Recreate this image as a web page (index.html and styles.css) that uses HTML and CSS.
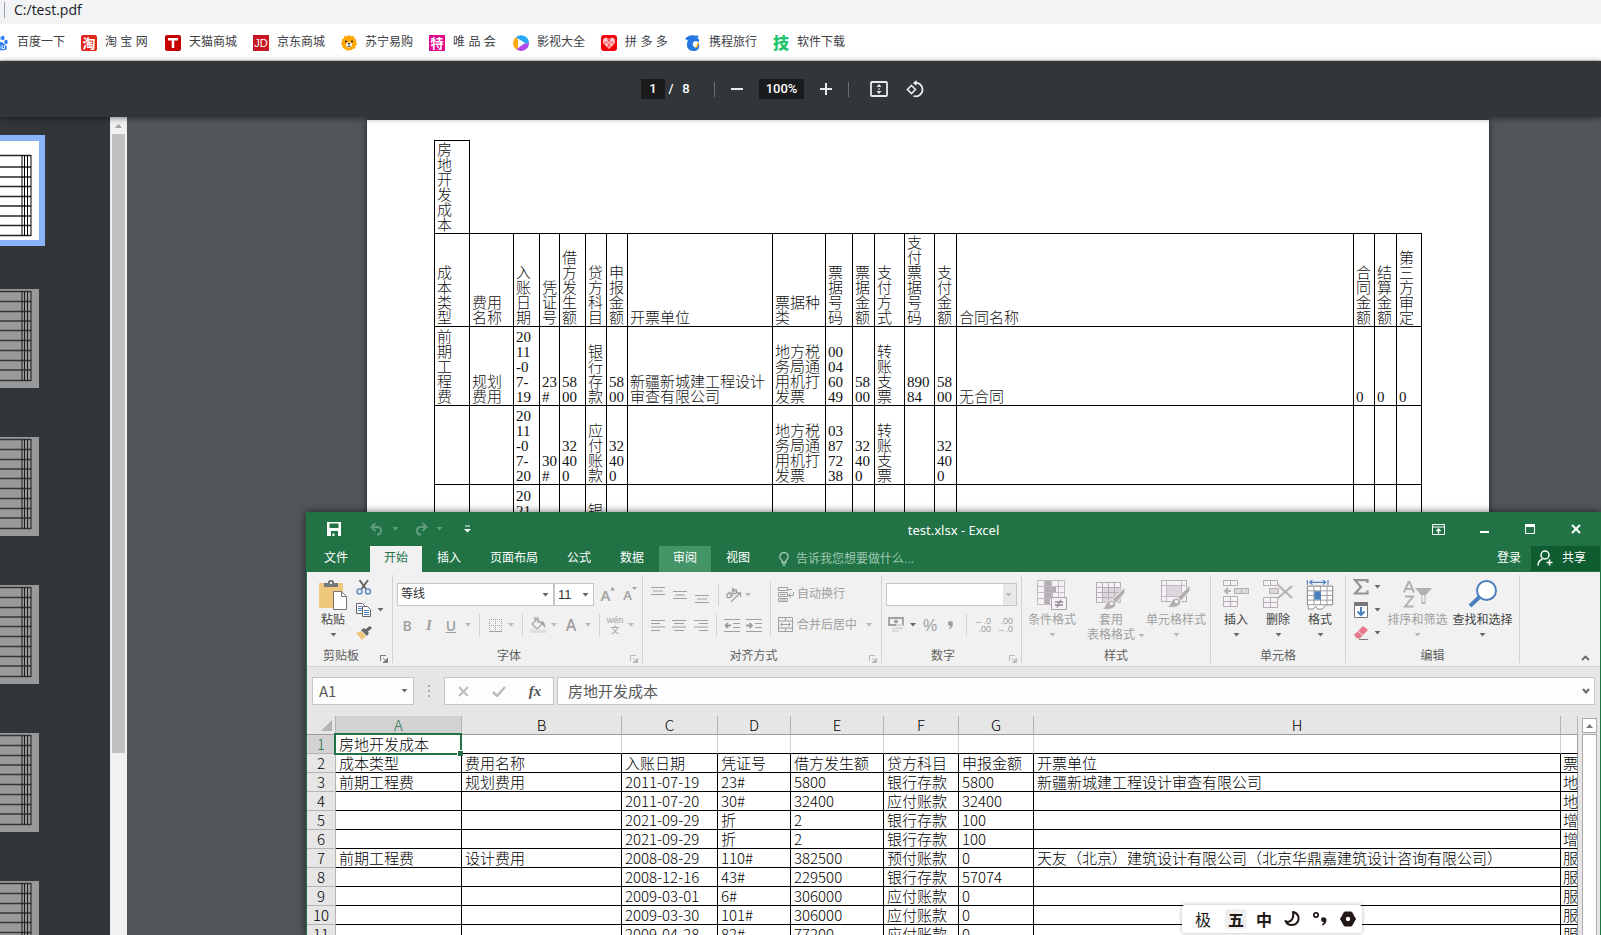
FILE: index.html
```html
<!DOCTYPE html>
<html lang="zh-CN">
<head>
<meta charset="utf-8">
<title>test.pdf</title>
<link rel="stylesheet" href="styles.css">
</head>
<body>
<svg class="defs" aria-hidden="true">
  <symbol id="arrow" viewBox="0 0 7 4"><path d="M0.5 0h6L3.5 3.5z" fill="currentColor"/></symbol>
  <symbol id="launch" viewBox="0 0 8 8"><path d="M0.5 6V0.5H6M3 3l3 3M7.500 3v4.500H3" fill="none" stroke="currentColor"/><path d="M7 3.500V7H3.500z" fill="currentColor"/></symbol>
  <symbol id="thumb-lines" viewBox="0 0 39 99">
    <g stroke="currentColor"><path d="M0 2.500h31M0 12.500h31M0 22.500h31M0 32h31M0 41.500h31M0 51.500h31M0 61.500h31M0 71.500h31M0 81h31M0 91.500h31" stroke-width="1.500" stroke-opacity=".8"/><path d="M24.500 2v90M27.500 2v90" /><path d="M22 2v90M31 2v90" stroke-width="2" stroke-opacity=".5"/></g>
  </symbol>
</svg>

<header class="address">
  <span class="address__rule"></span>
  <input class="address__input" aria-label="地址" value="C:/test.pdf">
</header>

<nav class="bookmarks">
  <a class="bookmark" href="#"><svg width="16" height="16" viewBox="0 0 16 16"><g fill="#2f7df6"><ellipse cx="2.500" cy="7.500" rx="1.700" ry="2.200"/><ellipse cx="5.700" cy="3.400" rx="1.800" ry="2.400"/><ellipse cx="9.800" cy="3" rx="1.800" ry="2.300"/><ellipse cx="13" cy="7" rx="1.700" ry="2.200"/><path d="M8 7c-2 0-2.500 2-4 3.300-2.200 2-1 5 1.500 5 1.500 0 3.500-.2 5 0 3.500.3 4.300-3 2.200-5C11 9 10 7 8 7z"/></g><path d="M5 11.500h2v2H5zM9 10v3.500h2.500V10" fill="none" stroke="#fff"/></svg><span>百度一下</span></a>
  <a class="bookmark bookmark--wide" href="#"><b class="badge badge--taobao">淘</b><span>淘 宝 网</span></a>
  <a class="bookmark" href="#"><svg width="16" height="16" viewBox="0 0 16 16"><rect width="16" height="16" rx="2" fill="#c40000"/><path d="M3 3h10v2.500H9.300V13H6.700V5.500H3z" fill="#fff"/></svg><span>天猫商城</span></a>
  <a class="bookmark" href="#"><b class="badge badge--jd">JD</b><span>京东商城</span></a>
  <a class="bookmark" href="#"><svg width="16" height="16" viewBox="0 0 16 16"><path d="M8 0l2 1.300 2.500-.3 1 2.300L15.300 5 15 7l1 2-1.500 2-.3 2.300-2.500.7L10 15.500 8 15l-2 .8-1.800-1.500L1.700 13 1.500 11 0 9l1-2L.700 4.700 2.700 3.300 3.500 1 6 1.300z" fill="#ffa800"/><circle cx="5" cy="6.500" r="1" fill="#222"/><circle cx="11" cy="6.500" r="1" fill="#222"/><ellipse cx="8" cy="9.800" rx="3" ry="2.600" fill="#fff"/><path d="M6.500 8h3L8 10z" fill="#222"/><path d="M6.500 11.200h3" stroke="#222"/></svg><span>苏宁易购</span></a>
  <a class="bookmark bookmark--wide" href="#"><b class="badge badge--vip">特</b><span>唯 品 会</span></a>
  <a class="bookmark" href="#"><svg width="16" height="16" viewBox="0 0 16 16"><path d="M3 2a8 8 0 0 1 13 6L9 9z" fill="#27a9f3"/><path d="M3 2a8 8 0 0 0 1 13l3-7z" fill="#ffab0f"/><path d="M16 8A8 8 0 0 1 3.500 14.500L10 9z" fill="#b04ae8"/><path d="M5 3.500v9L12 8z" fill="#fff"/></svg><span>影视大全</span></a>
  <a class="bookmark bookmark--wide" href="#"><svg width="16" height="16" viewBox="0 0 16 16"><rect width="16" height="16" rx="3" fill="#f40009"/><path d="M8 14L2 8V4.500L4.500 2.500 8 4l3.500-1.500L14 4.500V8z" fill="#fcc"/><path d="M3 6l7 6M6 4l7 5M13 6l-7 6M10 4L3 9M8 4v9" stroke="#f40009" stroke-width=".5"/></svg><span>拼 多 多</span></a>
  <a class="bookmark" href="#"><svg width="16" height="16" viewBox="0 0 16 16"><path d="M0 4c2-3 6-4.500 9-3.500L14 .8l-1.500 2c1.500 1 2 3 1 4.700C12 5.500 10 5.500 8.500 7c-1.500 1.600-.6 5 1.500 5.500s3.500-1.300 3-4.500c3 3 1 8-4.500 8C2 16 .5 10 3 5.500z" fill="#2577e3"/><path d="M12.500 8c1 2-.2 4-2 4.500" stroke="#ffa20d" stroke-width="1.500" fill="none"/></svg><span>携程旅行</span></a>
  <a class="bookmark" href="#"><b class="badge badge--tech">技</b><span>软件下载</span></a>
</nav>

<div class="pdfbar">
  <input class="pdfbar__page" aria-label="页码" value="1">
  <span class="pdfbar__slash">/</span><span class="pdfbar__total">8</span>
  <i class="pdfbar__rule"></i>
  <button class="pdfbar__btn" aria-label="缩小"><svg width="12" height="12"><path d="M0 6h12" stroke="#e8eaed" stroke-width="2"/></svg></button>
  <input class="pdfbar__zoom" aria-label="缩放" value="100%">
  <button class="pdfbar__btn" aria-label="放大"><svg width="12" height="12"><path d="M0 6h12M6 0v12" stroke="#e8eaed" stroke-width="2"/></svg></button>
  <i class="pdfbar__rule pdfbar__rule--end"></i>
  <button class="pdfbar__btn pdfbar__btn--fit" aria-label="适合页面"><svg width="18" height="16" viewBox="0 0 18 16"><rect x="1" y="1" width="16" height="14" rx="1" fill="none" stroke="#e8eaed" stroke-width="1.800"/><path d="M9 3l2.500 3h-5zM9 13l2.500-3h-5zM8.300 7.300h1.400v1.400H8.300z" fill="#e8eaed"/></svg></button>
  <button class="pdfbar__btn" aria-label="旋转"><svg width="18" height="18" viewBox="0 0 18 18"><path d="M8 3a6.800 6.800 0 1 1-.5 13" fill="none" stroke="#e8eaed" stroke-width="1.800"/><path d="M10.500 0v6L7 3z" fill="#e8eaed"/><path d="M5.500 5.500L9.500 9.500 5.500 13.500 1.500 9.500z" fill="none" stroke="#e8eaed" stroke-width="1.600"/></svg></button>
</div>

<main class="viewer">
  <aside class="thumbs">
    <div class="thumb thumb--on"><svg viewBox="0 0 39 99"><g stroke="#000"><path d="M0 14.500h31M0 26h31M0 36h31M0 45.500h31M0 55.500h31M0 65h31M0 75h31M0 84.500h31M0 94.500h31" stroke-width="1.500" stroke-opacity=".85"/><path d="M24.500 14v81M27.500 14v81"/><path d="M22 14v81M31 14v81" stroke-width="2" stroke-opacity=".5"/></g></svg></div>
    <div class="thumb"><svg><use href="#thumb-lines"/></svg></div>
    <div class="thumb"><svg><use href="#thumb-lines"/></svg></div>
    <div class="thumb"><svg><use href="#thumb-lines"/></svg></div>
    <div class="thumb"><svg><use href="#thumb-lines"/></svg></div>
    <div class="thumb"><svg><use href="#thumb-lines"/></svg></div>
  </aside>
  <div class="vscroll"><span class="vscroll__up"><svg width="7" height="4"><path d="M0 4h7L3.500 0z" fill="#a3a3a3"/></svg></span><span class="vscroll__thumb"></span><span class="vscroll__rest"></span></div>
  <section class="stage">
    <article class="sheet">
      <table class="ledger">
        <colgroup><col class="w35"><col class="w44"><col class="w26"><col class="w20"><col class="w26"><col class="w21"><col class="w21"><col class="w145"><col class="w53"><col class="w27"><col class="w22"><col class="w30"><col class="w30"><col class="w22"><col><col class="w21"><col class="w22"><col class="w25"></colgroup>
        <tr class="ledger__head"><td>房<br>地<br>开<br>发<br>成<br>本</td><td class="none" colspan="17"></td></tr>
        <tr class="ledger__head"><td>成<br>本<br>类<br>型</td><td>费用<br>名称</td><td>入<br>账<br>日<br>期</td><td>凭<br>证<br>号</td><td>借<br>方<br>发<br>生<br>额</td><td>贷<br>方<br>科<br>目</td><td>申<br>报<br>金<br>额</td><td>开票单位</td><td>票据种<br>类</td><td>票<br>据<br>号<br>码</td><td>票<br>据<br>金<br>额</td><td>支<br>付<br>方<br>式</td><td>支<br>付<br>票<br>据<br>号<br>码</td><td>支<br>付<br>金<br>额</td><td>合同名称</td><td>合<br>同<br>金<br>额</td><td>结<br>算<br>金<br>额</td><td>第<br>三<br>方<br>审<br>定</td></tr>
        <tr class="ledger__row"><td>前<br>期<br>工<br>程<br>费</td><td>规划<br>费用</td><td>20<br>11<br>-0<br>7-<br>19</td><td>23<br>#</td><td>58<br>00</td><td>银<br>行<br>存<br>款</td><td>58<br>00</td><td>新疆新城建工程设计<br>审查有限公司</td><td>地方税<br>务局通<br>用机打<br>发票</td><td>00<br>04<br>60<br>49</td><td>58<br>00</td><td>转<br>账<br>支<br>票</td><td>890<br>84</td><td>58<br>00</td><td>无合同</td><td>0</td><td>0</td><td>0</td></tr>
        <tr class="ledger__row"><td></td><td></td><td>20<br>11<br>-0<br>7-<br>20</td><td>30<br>#</td><td>32<br>40<br>0</td><td>应<br>付<br>账<br>款</td><td>32<br>40<br>0</td><td></td><td>地方税<br>务局通<br>用机打<br>发票</td><td>03<br>87<br>72<br>38</td><td>32<br>40<br>0</td><td>转<br>账<br>支<br>票</td><td></td><td>32<br>40<br>0</td><td></td><td></td><td></td><td></td></tr>
        <tr class="ledger__row ledger__row--next"><td></td><td></td><td>20<br>21</td><td></td><td></td><td><br>银</td><td></td><td></td><td></td><td></td><td></td><td></td><td></td><td></td><td></td><td></td><td></td><td></td></tr>
      </table>
    </article>
  </section>
</main>

<section class="excel">
  <div class="title">
    <div class="title__quick">
      <button aria-label="保存"><svg width="14" height="14" viewBox="0 0 14 14"><path d="M0 0h14v14H0zM2.500 1.500v4.500h9V1.500zM4 9v5h1.500v-2.500h2V14H11V9z" fill="#fff" fill-rule="evenodd"/></svg></button>
      <button class="dim" aria-label="撤销"><svg width="14" height="14" viewBox="0 0 14 14"><path d="M1 5h7.500a4 4 0 0 1 0 7.500H7M5.500 1L1.500 5l4 4" fill="none" stroke="#5e9c7a" stroke-width="2"/></svg><svg class="arrow"><use href="#arrow"/></svg></button>
      <button class="dim" aria-label="恢复"><svg width="14" height="14" viewBox="0 0 14 14"><path d="M13 5H5.500a4 4 0 0 0 0 7.500H7M8.500 1l4 4-4 4" fill="none" stroke="#5e9c7a" stroke-width="2"/></svg><svg class="arrow"><use href="#arrow"/></svg></button>
      <button aria-label="自定义"><svg width="7" height="8"><path d="M1 1h5" stroke="#fff"/><path d="M0 4h7L3.500 7.500z" fill="#fff"/></svg></button>
    </div>
    <span class="title__name">test.xlsx - Excel</span>
    <div class="title__win">
      <button aria-label="功能区显示选项"><svg width="13" height="11" viewBox="0 0 13 11"><path d="M.5.5h12v10H.5zM.5 3h12" fill="none" stroke="#fff"/><path d="M6.500 9.500V5.500M4.500 7l2-2 2 2" fill="none" stroke="#fff" stroke-width="1.400"/></svg></button>
      <button aria-label="最小化"><svg width="9" height="11"><path d="M0 8h9" stroke="#fff" stroke-width="2"/></svg></button>
      <button aria-label="最大化"><svg width="10" height="10"><path d="M.5 1.500h9v8h-9z" fill="none" stroke="#fff"/><path d="M0 1.500h10" stroke="#fff" stroke-width="3"/></svg></button>
      <button aria-label="关闭"><svg width="10" height="10"><path d="M1 1l8 8M9 1L1 9" stroke="#fff" stroke-width="2"/></svg></button>
    </div>
  </div>
  <div class="tabs">
    <button class="tab tab--file">文件</button>
    <button class="tab tab--on">开始</button>
    <button class="tab">插入</button>
    <button class="tab">页面布局</button>
    <button class="tab">公式</button>
    <button class="tab">数据</button>
    <button class="tab tab--hover">审阅</button>
    <button class="tab">视图</button>
    <label class="tell"><svg width="10" height="14" viewBox="0 0 10 14"><path d="M3 10V8.500C1.500 7.500.8 6.300.8 4.800a4.200 4.200 0 0 1 8.400 0C9.200 6.300 8.500 7.500 7 8.500V10z" fill="none" stroke="#9fc9b0" stroke-width="1.400"/><path d="M3 11.500h4M3.500 13.300h3" stroke="#9fc9b0" stroke-width="1.200"/></svg><input placeholder="告诉我您想要做什么..." aria-label="操作说明搜索"></label>
    <button class="login">登录</button>
    <button class="share"><svg width="16" height="16" viewBox="0 0 16 16"><circle cx="8" cy="5" r="4" fill="none" stroke="#fff" stroke-width="1.500"/><path d="M1 15.500c0-3.500 2-5.500 4.500-6.500M9.500 12.500h6M12.500 9.500v6" fill="none" stroke="#fff" stroke-width="1.500"/></svg>共享</button>
  </div>

  <div class="ribbon">
    <div class="group group--clip">
      <div class="group__body">
        <button class="big big--paste"><svg width="28" height="30" viewBox="0 0 28 30"><rect y="3" width="24" height="25" rx="1" fill="#eec67c"/><path d="M5 7V3h4V1.500L10.500 0h3L15 1.500V3h4v4z" fill="#777"/><path d="M11 2h2v2h-2z" fill="#f1f1f1"/><path d="M14.500 11.500h8l5 5v13h-13z" fill="#fff" stroke="#777"/><path d="M22.500 11.500v5h5" fill="none" stroke="#777"/></svg><span>粘贴</span><svg class="arrow"><use href="#arrow"/></svg></button>
        <div class="stack">
          <button aria-label="剪切"><svg width="16" height="16" viewBox="0 0 16 16"><path d="M3.500 1L10 10M12 1L5.500 10" stroke="#666" stroke-width="2"/><circle cx="3.500" cy="12.500" r="2.500" fill="none" stroke="#5f8fc4" stroke-width="1.500"/><circle cx="12" cy="12.500" r="2.500" fill="none" stroke="#5f8fc4" stroke-width="1.500"/></svg></button>
          <button aria-label="复制"><svg width="16" height="16" viewBox="0 0 16 16"><path d="M.5 1.500h6l2 2v8h-8z" fill="#fff" stroke="#666"/><path d="M2 4.500h4M2 6.500h4M2 8.500h4" stroke="#4a80bd"/><path d="M6.500 4.500h5l3 3v7h-8z" fill="#fff" stroke="#666"/><path d="M8 8.500h5M8 10.500h5M8 12.500h5" stroke="#4a80bd"/></svg><svg class="arrow"><use href="#arrow"/></svg></button>
          <button aria-label="格式刷"><svg width="16" height="16" viewBox="0 0 16 16"><path d="M0 8l5-2 5 5-4 4z" fill="#eec67c"/><path d="M5 5l3-2 5 5-2 3z" fill="#666"/><path d="M10 6l5-4" stroke="#666" stroke-width="3"/></svg></button>
        </div>
      </div>
      <div class="group__foot"><span>剪贴板</span><svg class="launch"><use href="#launch"/></svg></div>
    </div>

    <div class="group group--font off">
      <div class="group__body rows">
        <div class="row">
          <span class="combo combo--font"><select aria-label="字体"><option>等线</option></select><svg class="arrow"><use href="#arrow"/></svg></span><span class="combo combo--size"><select aria-label="字号"><option>11</option></select><svg class="arrow"><use href="#arrow"/></svg></span>
          <button class="grow" aria-label="增大字号"><b>A</b><svg width="5" height="4"><path d="M0 3.500h5L2.500 0z" fill="currentColor"/></svg></button>
          <button class="grow grow--less" aria-label="减小字号"><b>A</b><svg width="5" height="4"><path d="M0 0h5L2.500 3z" fill="currentColor"/></svg></button>
        </div>
        <div class="row">
          <button class="c22"><b>B</b></button><button class="c22"><i class="serif">I</i></button><button class="c22"><b class="under">U</b></button><svg class="arrow arrow--cell"><use href="#arrow"/></svg><i class="sep"></i>
          <button class="c20" aria-label="边框"><svg width="13" height="13" viewBox="0 0 13 13"><path d="M0 .5h13M0 6.500h13M.5 0v13M6.500 0v13M12.500 0v13" stroke="currentColor" stroke-dasharray="1 1"/><path d="M0 12.500h13" stroke="currentColor"/></svg></button><svg class="arrow arrow--cell"><use href="#arrow"/></svg><i class="sep"></i>
          <button class="c20" aria-label="填充颜色"><svg width="16" height="16" viewBox="0 0 16 16"><path d="M7 2l5 5-5 5-5-5zM5 5V1.500A1.500 1.500 0 0 1 8 1.500V6" fill="none" stroke="currentColor" stroke-width="1.200"/><path d="M11 4c3 0 4.500 3 4 7l-3-4z" fill="currentColor"/><path d="M0 12.500h16V16H0z" fill="#e2dde2"/></svg></button><svg class="arrow arrow--cell"><use href="#arrow"/></svg>
          <button class="c22"><b class="large">A</b></button><svg class="arrow arrow--cell"><use href="#arrow"/></svg><i class="sep"></i>
          <button class="c20 pinyin"><span>wén</span><span>文</span></button><svg class="arrow arrow--cell"><use href="#arrow"/></svg>
        </div>
      </div>
      <div class="group__foot"><span>字体</span><svg class="launch"><use href="#launch"/></svg></div>
    </div>

    <div class="group group--align off">
      <div class="group__body">
        <div class="rows rows--left">
          <div class="row">
            <button class="c22" aria-label="顶端对齐"><svg width="14" height="16"><path d="M0 .5h14M2 4h10M0 7.500h14" stroke="currentColor"/></svg></button><button class="c22" aria-label="垂直居中"><svg width="14" height="16"><path d="M0 4.500h14M2 8h10M0 11.500h14" stroke="currentColor"/></svg></button><button class="c22" aria-label="底端对齐"><svg width="14" height="16"><path d="M0 8.500h14M2 12h10M0 15.500h14" stroke="currentColor"/></svg></button><i class="sep"></i>
            <button class="c18 tilt" aria-label="方向"><svg width="17" height="16" viewBox="0 0 17 16"><g fill="none" stroke="currentColor" stroke-width="1.300"><circle cx="4" cy="8.500" r="2.200"/><path d="M4 5l4 4M7 1l3 4"/><circle cx="9.500" cy="4.500" r="2.200"/><path d="M6 15l9-9M11.500 6H15.500V10"/></g></svg></button><svg class="arrow arrow--cell"><use href="#arrow"/></svg>
          </div>
          <div class="row">
            <button class="c22" aria-label="左对齐"><svg width="14" height="11"><path d="M0 .5h14M0 3.500h9M0 7h14M0 10.500h9" stroke="currentColor"/></svg></button><button class="c22" aria-label="居中"><svg width="14" height="11"><path d="M0 .5h14M2 3.500h10M0 7h14M2 10.500h10" stroke="currentColor"/></svg></button><button class="c22" aria-label="右对齐"><svg width="14" height="11"><path d="M0 .5h14M5 3.500h9M0 7h14M5 10.500h9" stroke="currentColor"/></svg></button><i class="sep"></i>
            <button class="c22" aria-label="减少缩进"><svg width="17" height="13"><path d="M0 .5h16M9 4.500h7M9 8.500h7M0 12.500h16" stroke="currentColor"/><path d="M7 6.500H2M4 4L1.500 6.500 4 9" fill="none" stroke="currentColor" stroke-width="1.800"/></svg></button><button class="c22" aria-label="增加缩进"><svg width="17" height="13"><path d="M0 .5h16M9 4.500h7M9 8.500h7M0 12.500h16" stroke="currentColor"/><path d="M0 6.500h5M3.500 4L6 6.500 3.500 9" fill="none" stroke="currentColor" stroke-width="1.800"/></svg></button>
          </div>
        </div>
        <i class="sep sep--tall"></i>
        <div class="rows">
          <div class="row"><button class="text"><svg width="16" height="16" viewBox="0 0 16 16"><path d="M.5.500h9v3h-9zM.5 5.500h9v4h-9zM.5 11.500h9v3h-9zM9.500 2.500H14M2 7.500h6M2 13h6" fill="none" stroke="currentColor"/><path d="M15.500 5v3.500H11M13 6l-2.500 2.500L13 11" fill="none" stroke="currentColor"/></svg>自动换行</button></div>
          <div class="row"><button class="text"><svg width="16" height="16" viewBox="0 0 16 16"><path d="M.5.500h14v14H.500zM.5 4h14M.5 11h14M7.500.5V4M7.500 11v3.500" fill="none" stroke="currentColor"/><path d="M2.500 7.500h10M4.500 5.500l-2 2 2 2M10.500 5.500l2 2-2 2" fill="none" stroke="currentColor"/></svg>合并后居中</button><svg class="arrow arrow--cell arrow--far"><use href="#arrow"/></svg></div>
        </div>
      </div>
      <div class="group__foot"><span>对齐方式</span><svg class="launch"><use href="#launch"/></svg></div>
    </div>

    <div class="group group--number off">
      <div class="group__body rows">
        <div class="row"><span class="combo combo--num"><select aria-label="数字格式"><option></option></select><svg class="arrow"><use href="#arrow"/></svg></span></div>
        <div class="row">
          <button class="c22" aria-label="会计数字格式"><svg width="16" height="16" viewBox="0 0 16 16"><path d="M1 1h14v7H1z" fill="none" stroke="currentColor" stroke-width="1.800"/><circle cx="8" cy="4.500" r="2" fill="currentColor"/><path d="M8 7h7v5H8zM4 11h7v4H4z" fill="#d9d4d9"/><path d="M8 9.500h7M4 13h7" stroke="#f1f1f1"/></svg></button><svg class="arrow arrow--cell dark"><use href="#arrow"/></svg>
          <button class="c22 pct">%</button><button class="c20" aria-label="千位分隔样式"><svg width="6" height="9" viewBox="0 0 6 9"><path d="M2.500 0a2.500 2.500 0 0 1 2.500 2.700C5 5.500 3.500 7.500 1 8L.6 7C2 6.500 2.700 5.800 2.800 4.900A2.500 2.500 0 1 1 2.500 0z" fill="currentColor"/></svg></button><i class="sep"></i>
          <button class="c22 dec" aria-label="增加小数位数"><span>←.0</span><span>.00</span></button><button class="c22 dec" aria-label="减少小数位数"><span>.00</span><span>→.0</span></button>
        </div>
      </div>
      <div class="group__foot"><span>数字</span><svg class="launch"><use href="#launch"/></svg></div>
    </div>

    <div class="group group--style off">
      <div class="group__body">
        <button class="big"><svg width="30" height="30" viewBox="0 0 30 30"><path d="M.5.500h27v24H.5z" fill="#f6f1f7"/><path d="M8 0h6v6h-6zM8 7h11v5H8zM8 13h8v5H8zM8 19h5v6H8z" fill="#b3afb3"/><path d="M.5.500h27v24H.500zM7.500.500v24M14.500.5v24M21.500.5v24M.5 6.500h27M.5 12.500h27M.5 18.500h27" fill="none" stroke="#c1bcc1"/><path d="M14.500 17.500h15v12h-15z" fill="#f6f1f7" stroke="#a9a5a9"/><path d="M18 22h8M18 25h8M24 19.500l-4 8" stroke="#8d898d" stroke-width="1.300"/></svg><span>条件格式</span><svg class="arrow"><use href="#arrow"/></svg></button>
        <button class="big"><svg width="30" height="30" viewBox="0 0 30 30"><path d="M.5 2.500h24v20H.5z" fill="#f6f1f7" stroke="#b3afb3"/><path d="M6.500 7.500h18v15h-18z" fill="#dcd7dc"/><path d="M.5 7.500h24M.5 12.500h24M.5 17.500h24M6.500 2.500v20M12.500 2.500v20M18.500 2.500v20" stroke="#b3afb3"/><path d="M29 7v6L20 23l-4-3z" fill="#b3afb3" stroke="#f1f1f1"/><path d="M15 20c3 0 5 2 5 5-3 5-9 5-14 4 4-1 3-8 9-9z" fill="#b3afb3" stroke="#f1f1f1"/><circle cx="15.500" cy="23.500" r="1.800" fill="#f1f1f1"/></svg><span>套用<br>表格格式<svg class="arrow arrow--inline"><use href="#arrow"/></svg></span></button>
        <button class="big"><svg width="30" height="30" viewBox="0 0 30 30"><path d="M.5.500h25v21H.5z" fill="#f6f1f7" stroke="#b3afb3"/><path d="M6 6h14v10H6z" fill="#dcd7dc"/><path d="M.5 5.500h25M.5 16.500h25M5.500.5v21M20.500.5v21" stroke="#c1bcc1"/><path d="M29 5v6L20 21l-4-3z" fill="#b3afb3" stroke="#f1f1f1"/><path d="M15 18c3 0 5 2 5 5-3 5-9 5-14 4 4-1 3-8 9-9z" fill="#b3afb3" stroke="#f1f1f1"/><circle cx="15.500" cy="21.500" r="1.800" fill="#f1f1f1"/></svg><span>单元格样式</span><svg class="arrow"><use href="#arrow"/></svg></button>
      </div>
      <div class="group__foot"><span>样式</span></div>
    </div>

    <div class="group group--cells">
      <div class="group__body">
        <button class="big c42"><svg width="28" height="30" viewBox="0 0 28 30"><g fill="#f6f1f7" stroke="#b3afb3"><path d="M1.500.500h14v5h-14zM8.500.500v5M1.500 16.500h14v10h-14zM8.500 16.500v10M1.500 21.500h14"/><path d="M12.500 8.500h14v5h-14zM19.500 8.500v5" fill="#dcd7dc"/></g><path d="M9 11H3.500M6 8l-3 3 3 3" fill="none" stroke="#b3afb3" stroke-width="1.800"/></svg><span>插入</span><svg class="arrow"><use href="#arrow"/></svg></button>
        <button class="big c42"><svg width="30" height="30" viewBox="0 0 30 30"><g fill="#f6f1f7" stroke="#b3afb3"><path d="M.5.500h14v5H.500zM7.500.500v5M.5 17.500h14v10H.500zM7.500 17.500v10M.5 22.500h14"/><path d="M6.500 8.500h9v5h-9z" fill="#dcd7dc"/></g><path d="M15 5l14 13M29 6L15 18" stroke="#b3afb3" stroke-width="2"/></svg><span>删除</span><svg class="arrow"><use href="#arrow"/></svg></button>
        <button class="big c42"><svg width="28" height="32" viewBox="0 0 28 32"><path d="M.5 0v5M22.500 0v5M3 2.500h17M6 0L3 2.500 6 5M17 0l3 2.500L17 5" fill="none" stroke="#4a80bd" stroke-width="1.200"/><path d="M.5 6.500h27v20H.5z" fill="#fff" stroke="#777"/><path d="M.5 11.500h27M.5 21.500h27M7.500 6.500v20M14.500 6.500v20M21.500 6.500v20M.5 16.500h27" stroke="#999"/><path d="M8 12h7v9H8z" fill="#4a80bd"/><path d="M1.500 27v4h5l3-3 2 3h5l3-3.500" fill="#fff" stroke="#888"/></svg><span>格式</span><svg class="arrow"><use href="#arrow"/></svg></button>
      </div>
      <div class="group__foot"><span>单元格</span></div>
    </div>

    <div class="group group--edit">
      <div class="group__body">
        <div class="stack stack--edit">
          <button aria-label="自动求和"><svg width="16" height="16" viewBox="0 0 16 16"><path d="M14.500 4V1.200H2L8 8l-6 6.500h12.500V11.500" fill="none" stroke="#929292" stroke-width="2.200"/></svg><svg class="arrow"><use href="#arrow"/></svg></button>
          <button aria-label="填充"><svg width="16" height="16" viewBox="0 0 16 16"><path d="M1.500.500h13v15h-13z" fill="#fff" stroke="#777"/><path d="M1 0h14v4H1z" fill="#777"/><path d="M8 5v8M4.500 9.500L8 13l3.500-3.500" fill="none" stroke="#4a80bd" stroke-width="2"/></svg><svg class="arrow"><use href="#arrow"/></svg></button>
          <button aria-label="清除"><svg width="16" height="16" viewBox="0 0 16 16"><path d="M10 1l5 4-5 5-5-4z" fill="#e8798c"/><path d="M4.500 6.500l5 4-2.500 3H4L1 10z" fill="#e8798c"/><path d="M6 14.500h9" stroke="#777"/></svg><svg class="arrow"><use href="#arrow"/></svg></button>
        </div>
        <button class="big c65 faded"><svg width="30" height="30" viewBox="0 0 30 30"><path d="M1 12.500L5.500 2h1L11 12.500M2.500 9h7M2 16.500h8l-8 10h8.500" fill="none" stroke="#b3afb3" stroke-width="2"/><path d="M12 8h17l-6.500 7.500V24h-4v-8.500z" fill="#b3afb3"/><path d="M19.500 15h2v7h-2z" fill="#f1f1f1"/></svg><span>排序和筛选</span><svg class="arrow"><use href="#arrow"/></svg></button>
        <button class="big c65"><svg width="30" height="30" viewBox="0 0 30 30"><path d="M2 26l10-9.500" stroke="#4a80bd" stroke-width="4"/><circle cx="18.500" cy="10.500" r="9.500" fill="#fff" stroke="#4a80bd" stroke-width="2"/></svg><span>查找和选择</span><svg class="arrow"><use href="#arrow"/></svg></button>
      </div>
      <div class="group__foot"><span>编辑</span></div>
    </div>
    <button class="collapse" aria-label="折叠功能区"><svg width="9" height="6"><path d="M1 5l3.500-3.500L8 5" fill="none" stroke="#666" stroke-width="1.800"/></svg></button>
  </div>

  <div class="formula">
    <label class="formula__name"><input value="A1" aria-label="名称框"><svg class="arrow"><use href="#arrow"/></svg></label>
    <span class="formula__dots"><i></i><i></i><i></i></span>
    <div class="formula__tools">
      <button aria-label="取消"><svg width="11" height="11"><path d="M1 1l9 9M10 1l-9 9" stroke="#bcbcbc" stroke-width="2"/></svg></button>
      <button aria-label="输入"><svg width="14" height="11"><path d="M1 6l4 4 8-9" fill="none" stroke="#bcbcbc" stroke-width="2.500"/></svg></button>
      <button class="fx">fx</button>
    </div>
    <label class="formula__input"><input value="房地开发成本" aria-label="编辑栏"><svg width="8" height="6"><path d="M1 1l3 3.500L7 1" fill="none" stroke="#666" stroke-width="2"/></svg></label>
  </div>

  <div class="book">
    <div class="cells">
    <table class="grid">
      <colgroup><col class="w29"><col class="w126"><col class="w160"><col class="w96"><col class="w73"><col class="w93"><col class="w75"><col class="w75"><col><col class="w17"></colgroup>
      <thead><tr><th class="corner"><svg width="11" height="11"><path d="M11 0v11H0z" fill="#b4b4b4"/></svg></th><th class="sel">A</th><th>B</th><th>C</th><th>D</th><th>E</th><th>F</th><th>G</th><th>H</th><th></th></tr></thead>
      <tbody>
        <tr class="plain"><th class="sel">1</th><td class="active">房地开发成本<i class="cursor"></i></td><td></td><td></td><td></td><td></td><td></td><td></td><td></td><td></td></tr>
        <tr><th>2</th><td>成本类型</td><td>费用名称</td><td>入账日期</td><td>凭证号</td><td>借方发生额</td><td>贷方科目</td><td>申报金额</td><td>开票单位</td><td>票</td></tr>
        <tr><th>3</th><td>前期工程费</td><td>规划费用</td><td>2011-07-19</td><td>23#</td><td>5800</td><td>银行存款</td><td>5800</td><td>新疆新城建工程设计审查有限公司</td><td>地</td></tr>
        <tr><th>4</th><td></td><td></td><td>2011-07-20</td><td>30#</td><td>32400</td><td>应付账款</td><td>32400</td><td></td><td>地</td></tr>
        <tr><th>5</th><td></td><td></td><td>2021-09-29</td><td>折</td><td>2</td><td>银行存款</td><td>100</td><td></td><td>增</td></tr>
        <tr><th>6</th><td></td><td></td><td>2021-09-29</td><td>折</td><td>2</td><td>银行存款</td><td>100</td><td></td><td>增</td></tr>
        <tr><th>7</th><td>前期工程费</td><td>设计费用</td><td>2008-08-29</td><td>110#</td><td>382500</td><td>预付账款</td><td>0</td><td>天友（北京）建筑设计有限公司（北京华鼎嘉建筑设计咨询有限公司）</td><td>服</td></tr>
        <tr><th>8</th><td></td><td></td><td>2008-12-16</td><td>43#</td><td>229500</td><td>银行存款</td><td>57074</td><td></td><td>服</td></tr>
        <tr><th>9</th><td></td><td></td><td>2009-03-01</td><td>6#</td><td>306000</td><td>应付账款</td><td>0</td><td></td><td>服</td></tr>
        <tr><th>10</th><td></td><td></td><td>2009-03-30</td><td>101#</td><td>306000</td><td>应付账款</td><td>0</td><td></td><td>服</td></tr>
        <tr><th>11</th><td></td><td></td><td>2009-04-28</td><td>82#</td><td>77200</td><td>应付账款</td><td>0</td><td></td><td>服</td></tr>
      </tbody>
    </table>
    </div>
    <div class="bookscroll"><span class="bookscroll__up"><svg width="7" height="4"><path d="M0 4h7L3.500 0z" fill="#777"/></svg></span><span class="bookscroll__thumb"></span></div>
  </div>
</section>

<div class="ime">
  <span class="ime__item">极</span><span class="ime__item ime__item--on">五</span><span class="ime__item ime__item--bold">中</span>
  <span class="ime__item"><svg width="16" height="16" viewBox="0 0 16 16"><path d="M9 1c5 1 7 6 4.500 10S4 15.500 1.500 10c3 2 9 0 7.500-9z" fill="none" stroke="#231815" stroke-width="2" stroke-linejoin="round"/></svg></span>
  <span class="ime__item"><svg width="16" height="16" viewBox="0 0 16 16"><circle cx="4" cy="4" r="2.200" fill="none" stroke="#231815" stroke-width="1.700"/><path d="M12 6.500a2.500 2.500 0 0 1 2.500 2.500c0 3-2 5-4 5.500l-.5-1.500c1-.5 1.500-1 1.700-2A2.300 2.300 0 1 1 12 6.500z" fill="#231815"/></svg></span>
  <span class="ime__item"><svg width="16" height="16" viewBox="0 0 16 16"><path d="M4.500 1h7L15.500 8l-4 7h-7L.5 8z" fill="#231815" stroke="#231815" stroke-linejoin="round"/><circle cx="8" cy="8" r="2.200" fill="#fff"/></svg></span>
</div>
</body>
</html>
```
FILE: styles.css
```css
* { box-sizing: border-box; }
body {
  margin: 0;
  height: 100vh;
  overflow: hidden;
  display: flex;
  flex-direction: column;
  position: relative;
  font: 12px/15px "Liberation Sans", "Noto Sans CJK SC", sans-serif;
  color: #444;
}
button, input, select {
  font: inherit;
  color: inherit;
  border: 0;
  padding: 0;
  margin: 0;
  background: none;
  border-radius: 0;
  outline: 0;
  min-width: 0;
}
button { display: flex; align-items: center; justify-content: center; white-space: nowrap; }
svg { flex: none; display: block; }
.defs { position: absolute; width: 0; height: 0; }
.arrow { width: 7px; height: 4px; color: #6a6a6a; }

/* address and bookmarks */
.address { flex: none; height: 24px; background: #f1f3f4; display: flex; padding: 2px 0 0 4px; gap: 9px; }
.address__rule { width: 1px; height: 16px; background: #9aa0a6; }
.address__input { flex: 1; height: 16px; font: 14px/16px "Open Sans", sans-serif; color: #202124; }
.bookmarks { flex: none; height: 37px; background: #fff; border-bottom: 1px solid #dadce0; display: flex; align-items: center; gap: 16px; margin-left: -7px; padding-top: 1px; white-space: nowrap; }
.bookmark { display: flex; align-items: center; gap: 8px; color: #3c4043; text-decoration: none; }
.bookmark--wide { min-width: 68px; }
.badge { width: 16px; height: 16px; font: 700 13px/15px "Noto Sans CJK SC", sans-serif; text-align: center; color: #fff; }
.badge--taobao { background: #e1251b; border-radius: 2px; }
.badge--jd { background: #c81623; font: 11px/16px "Liberation Sans", sans-serif; }
.badge--vip { background: #e10b8c; }
.badge--tech { color: #20c46a; font-size: 16px; font-weight: 900; }

/* viewer toolbar */
.pdfbar { flex: none; height: 56px; background: #323639; display: flex; align-items: center; padding-left: 641px; color: #fff; font: 500 13px/20px Roboto, sans-serif; position: relative; z-index: 1; box-shadow: 0 1px 6px rgba(0, 0, 0, .5); }
.pdfbar__page { width: 24px; height: 20px; background: #191b1c; text-align: center; }
.pdfbar__slash { width: 12px; text-align: center; }
.pdfbar__total { width: 18px; text-align: center; }
.pdfbar__rule { width: 1px; height: 15px; background: #6b6e71; margin: 0 11px 0 19px; }
.pdfbar__rule--end { margin: 0 19px 0 11px; }
.pdfbar__btn { width: 22px; height: 24px; }
.pdfbar__btn--fit { margin-right: 14px; }
.pdfbar__zoom { width: 45px; height: 20px; margin: 0 11px; background: #191b1c; text-align: center; }

/* viewer body */
.viewer { flex: 1; min-height: 0; display: flex; background: #525659; }
.thumbs { flex: none; width: 110px; background: #323639; padding-top: 24px; display: flex; flex-direction: column; gap: 49px; overflow: hidden; }
.thumb { flex: none; width: 39px; height: 99px; background: #98999b; color: #1c1c1d; }
.thumb svg { width: 39px; height: 99px; }
.thumb--on { background: #fff; box-shadow: 0 0 0 6px #8ab4f8; }
.vscroll { flex: none; width: 17px; background: #f1f1f1; padding: 0 2px; display: flex; flex-direction: column; }
.vscroll__up { height: 17px; display: flex; align-items: center; justify-content: center; }
.vscroll__thumb { flex: 619; background: #c1c1c1; }
.vscroll__rest { flex: 182; }
.stage { flex: 1; min-width: 0; padding: 3px 112px 0 240px; }
.sheet { height: 100%; overflow: hidden; background: #fff; padding: 20px 67px 0; box-shadow: 0 0 6px rgba(0, 0, 0, .6); }
.ledger { width: 100%; table-layout: fixed; border-collapse: collapse; font: 300 15px/15px "Liberation Serif", "Noto Sans CJK SC", serif; color: #111; }
.ledger td { border: 1px solid #000; padding: 0 0 0 2px; vertical-align: bottom; white-space: nowrap; }
.ledger .none { border-width: 0 0 1px; }
.ledger__head { height: 93px; }
.ledger__row { height: 79px; }
.ledger .ledger__row--next td { vertical-align: top; padding-top: 4px; }

.w17 { width: 17px; } .w20 { width: 20px; } .w21 { width: 21px; } .w22 { width: 22px; }
.w25 { width: 25px; } .w26 { width: 26px; } .w27 { width: 27px; } .w29 { width: 29px; }
.w30 { width: 30px; } .w35 { width: 35px; } .w44 { width: 44px; } .w53 { width: 53px; }
.w73 { width: 73px; } .w75 { width: 75px; } .w93 { width: 93px; } .w96 { width: 96px; }
.w126 { width: 126px; } .w145 { width: 145px; } .w160 { width: 160px; }

/* spreadsheet window floating over the viewer */
.excel { position: absolute; z-index: 2; left: 306px; right: 0; top: 512px; bottom: 0; display: flex; flex-direction: column; background: #e6e6e6; border: solid #217346; border-width: 0 1px; box-shadow: 0 0 8px rgba(0, 0, 0, .6); }
.title { flex: none; height: 34px; background: #217346; color: #fff; display: grid; grid-template-columns: 1fr auto 1fr; align-items: center; }
.title__quick { display: flex; padding: 0 0 1px 20px; align-items: center; gap: 19px; }
.title__quick .dim { gap: 8px; margin-left: 10px; }
.title__quick .dim + .dim { margin-left: -4px; }
.title__quick .arrow { color: #5e9c7a; }
.title__quick button:last-child { margin-left: 2px; }
.title__name { font: 13px/16px "Noto Sans", sans-serif; padding-top: 2px; }
.title__win { display: flex; justify-content: flex-end; padding-right: 1px; }
.title__win button { width: 46px; height: 32px; }
.tabs { flex: none; height: 26px; background: #217346; color: #fff; display: flex; gap: 1px; }
.tab { padding: 0 14px 1px; }
.tab--file { width: 62px; padding: 0 21px 1px 17px; }
.tab--on { background: #f1f1f1; color: #217346; }
.tab--hover { background: #439467; }
.tell { flex: 1; display: flex; align-items: center; gap: 7px; margin-left: 14px; }
.tell input { flex: 1; height: 18px; }
.tell input::placeholder { color: #9fc9b0; opacity: 1; }
.login { padding: 0 9px 1px; }
.share { width: 69px; height: 25px; background: #0e5c2f; gap: 9px; padding: 0 8px 1px 0; }

/* ribbon */
.ribbon { flex: none; height: 95px; background: #f1f1f1; border-bottom: 1px solid #d2d2d2; display: flex; }
.group { flex: none; display: flex; flex-direction: column; position: relative; border-right: 1px solid #d2d2d2; border-image: linear-gradient(#f1f1f1 4px, #d2d2d2 4px, #d2d2d2 90px, #f1f1f1 90px) 1; border-width: 0 1px 0 0; }
.group__body { flex: 1; display: flex; }
.group__foot { height: 20px; display: flex; align-items: center; color: #5f5f5f; }
.group__foot span { flex: 1; text-align: center; }
.launch { width: 8px; height: 8px; margin: 6px 4px 0 5px; color: #777; }
.off .launch { color: #b8b8b8; }
.off, .faded { color: #a0a0a0; }
.off .arrow, .faded .arrow { color: #b8b8b8; }
.off .dark { color: #666; }
.group--clip { width: 86px; }
.group--clip .group__body { padding-left: 10px; gap: 7px; }
.group--font { width: 250px; }
.group--align { width: 239px; }
.group--number { width: 140px; }
.group--style { width: 189px; }
.group--style .group__body { padding-left: 6px; gap: 11px; }
.group--cells { width: 135px; }
.group--cells .group__body { padding-left: 4px; }
.group--edit { width: 174px; }
.big { flex-direction: column; justify-content: flex-start; padding-top: 8px; }
.big > svg:first-child { height: 30px; }
.big span { margin-top: 3px; line-height: 15px; position: relative; }
.big > .arrow { margin-top: 5px; }
.big--paste { width: 32px; }
.c42 { width: 42px; }
.c65 { width: 65px; }
.c22 { width: 22px; }
.c20 { width: 20px; }
.c18 { width: 18px; }
.arrow--inline { position: absolute; right: -10px; bottom: 5px; }
.stack { padding-top: 3px; display: flex; flex-direction: column; }
.stack button { height: 23px; gap: 5px; justify-content: flex-start; }
.stack--edit { padding-left: 7px; width: 39px; }
.rows { flex: 1; padding: 11px 0 0 3px; display: flex; flex-direction: column; gap: 8px; }
.rows.rows--left { flex: none; width: 122px; padding-left: 4px; }
.group--align .rows { padding-left: 0; }
.group--align .rows--left { padding-left: 4px; }
.row { height: 23px; display: flex; align-items: center; }
.row + .row { height: 22px; }
.sep { width: 1px; height: 22px; margin: 0 5px; background: #d2d2d2; }
.sep--tall { height: 54px; margin-top: 10px; }
.arrow--cell { width: 12px; padding: 0 2px; }
.arrow--far { margin-left: 6px; }
.combo { position: relative; height: 23px; border: 1px solid #c6c6c6; background: #fff; color: #333; margin-left: 1px; }
.combo select { appearance: none; width: 100%; height: 21px; padding-left: 3px; }
.combo .arrow { position: absolute; right: 4px; top: 9px; color: #666; pointer-events: none; }
.combo--font { width: 157px; }
.combo--size { width: 40px; margin-left: 0; font-size: 13px; }
.combo--num { width: 131px; background: linear-gradient(90deg, #fff 116px, #e8e8e8 116px); }
.combo--num .arrow { color: #b8b8b8; }
.grow { width: 22px; align-items: flex-start; font-size: 15px; }
.combo + .grow { margin-left: 3px; }
.grow b { padding-top: 1px; }
.grow--less { font-size: 13px; }
.row b { font-family: "Open Sans", sans-serif; font-weight: 600; }
.row .c22 b { font-size: 14px; }
.row .c22 .large { font-size: 16px; }
.serif { font: italic 700 15px/16px "Liberation Serif", serif; }
.under { text-decoration: underline; }
.pinyin { flex-direction: column; line-height: 10px; font-size: 9px; }
.pct { font-size: 16px; }
.dec { flex-direction: column; font-size: 9px; line-height: 8px; align-items: flex-end; padding-right: 3px; }
.text { gap: 3px; padding-left: 2px; }
.collapse { margin-left: auto; align-self: flex-end; padding: 0 10px 5px; }

/* formula bar */
.formula { flex: none; display: flex; height: 49px; padding: 10px 5px 11px; color: #595959; font: 15px/26px "Noto Sans CJK SC", sans-serif; }
.formula__name, .formula__tools, .formula__input { display: flex; align-items: center; background: #fdfdfd; border: 1px solid #c6c6c6; }
.formula__name { width: 102px; padding: 0 5px 0 6px; }
.formula__name input, .formula__input input { flex: 1; height: 24px; }
.formula__dots { width: 30px; display: flex; flex-direction: column; align-items: center; justify-content: center; gap: 3px; }
.formula__dots i { width: 2px; height: 2px; background: #aaa; }
.formula__tools { width: 110px; }
.formula__tools button { flex: 1; }
.fx { font: italic 700 15px/20px "Liberation Serif", serif; color: #555; }
.formula__input { flex: 1; margin-left: 3px; padding: 0 4px 0 10px; }

/* cells */
.book { flex: 1; min-height: 0; overflow: hidden; display: flex; gap: 4px; padding-right: 3px; }
.cells { flex: 1; min-width: 0; }
.grid { width: 100%; table-layout: fixed; border-collapse: separate; border-spacing: 0; font: 300 15px/18px "Noto Sans CJK SC", sans-serif; color: #000; }
.grid th { font-weight: inherit; height: 19px; padding: 0; background: #e6e6e6; border: solid #b4b4b4; border-width: 0 1px 1px 0; }
.grid thead th { border-bottom-color: #9b9b9b; }
.grid .sel { background: #d2d2d2; color: #217346; }
.grid .corner { vertical-align: bottom; padding: 0 3px 3px 14px; }
.grid td { height: 19px; padding: 0 0 0 3px; background: #fff; border: solid #000; border-width: 0 1px 1px 0; white-space: nowrap; }
.grid .plain td { border-right-color: #d4d4d4; }
.grid .plain .active { position: relative; }
.grid td:last-child { padding-left: 2px; border-right-color: #9b9b9b; }
.cursor { position: absolute; inset: -2px -1px -2px -2px; border: 2px solid #217346; }
.cursor::after { content: ""; position: absolute; right: -3px; bottom: -3px; width: 5px; height: 5px; background: #217346; box-shadow: -1px -1px 0 #fff; }
.bookscroll { flex: none; width: 15px; margin-top: 2px; display: flex; flex-direction: column; gap: 1px; }
.bookscroll__up { height: 15px; border: 1px solid #ababab; background: #fff; display: flex; align-items: center; justify-content: center; }
.bookscroll__thumb { flex: 1; border: 1px solid #ababab; border-bottom: 0; background: #fff; }

/* input method bar */
.ime { position: absolute; z-index: 3; right: 239px; bottom: 2px; height: 28px; background: #fff; border-radius: 3px; box-shadow: 0 0 4px rgba(0, 0, 0, .3); display: flex; align-items: center; gap: 6px; padding: 0 3px 0 10px; font: 16px/20px "Noto Sans CJK SC", sans-serif; color: #231815; }
.ime__item { width: 22px; height: 20px; display: flex; align-items: center; justify-content: center; }
.ime__item--on { background: #efefef; border-radius: 3px; font-weight: 700; margin-left: 5px; }
.ime__item--bold { font-weight: 700; }
```
